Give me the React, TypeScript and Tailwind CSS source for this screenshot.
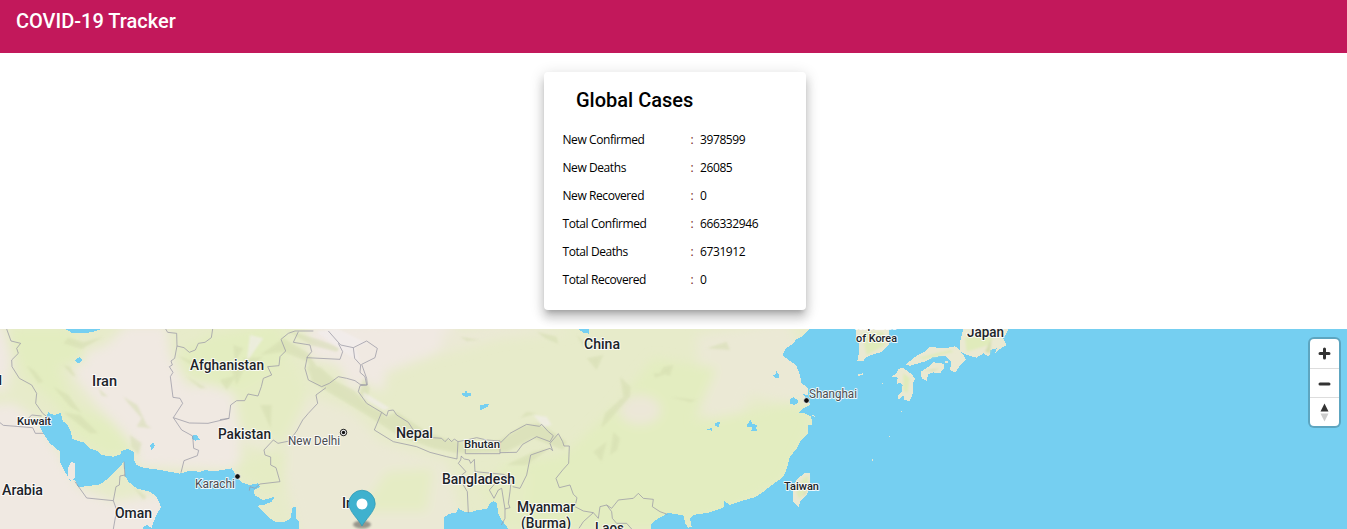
import React from "react";

const cases: [string, string][] = [
  ["New Confirmed", "3978599"],
  ["New Deaths", "26085"],
  ["New Recovered", "0"],
  ["Total Confirmed", "666332946"],
  ["Total Deaths", "6731912"],
  ["Total Recovered", "0"],
];

type Label = { t: string; x: number; y: number; w: number; s: number; minor?: boolean };

const labels: Label[] = [
  { t: "q", x: -6, y: 53, w: 8, s: 13.5 },
  { t: "Iran", x: 92, y: 57, w: 25, s: 14 },
  { t: "Afghanistan", x: 190, y: 41, w: 74, s: 14 },
  { t: "Pakistan", x: 218, y: 110, w: 53, s: 14 },
  { t: "Kuwait", x: 17, y: 96, w: 34, s: 11.5 },
  { t: "Arabia", x: 2, y: 166, w: 41, s: 14 },
  { t: "Oman", x: 115, y: 189, w: 37, s: 14 },
  { t: "Karachi", x: 195, y: 159, w: 40, s: 12.5, minor: true },
  { t: "New Delhi", x: 288, y: 116, w: 52, s: 12.5, minor: true },
  { t: "Nepal", x: 396, y: 109, w: 37, s: 14 },
  { t: "India", x: 342, y: 179, w: 31, s: 14 },
  { t: "Bhutan", x: 464, y: 119, w: 36, s: 11.5 },
  { t: "Bangladesh", x: 442, y: 155, w: 73, s: 14 },
  { t: "Myanmar", x: 517, y: 183, w: 58, s: 14 },
  { t: "(Burma)", x: 521, y: 199, w: 50, s: 14 },
  { t: "Laos", x: 595, y: 204, w: 29, s: 14 },
  { t: "China", x: 584, y: 20, w: 36, s: 14 },
  { t: "Shanghai", x: 809, y: 69, w: 48, s: 12.5, minor: true },
  { t: "Taiwan", x: 784, y: 161, w: 35, s: 11.5 },
  { t: "Republic", x: 855, y: 0, w: 42, s: 11.5 },
  { t: "of Korea", x: 856, y: 13, w: 41, s: 11.5 },
  { t: "Japan", x: 967, y: 8, w: 37, s: 14 },
];

function WorldMap() {
  return (
    <svg className="block h-[200px] w-full" viewBox="0 0 1347 200" preserveAspectRatio="none">
      <defs>
        <filter id="soft" x="-20%" y="-20%" width="140%" height="140%">
          <feGaussianBlur stdDeviation="16" />
        </filter>
        <filter id="relief" x="-20%" y="-20%" width="140%" height="140%">
          <feGaussianBlur stdDeviation="3" />
        </filter>
        <filter id="pinShadow" x="-30%" y="-60%" width="160%" height="220%">
          <feGaussianBlur stdDeviation="1.2" />
        </filter>
      </defs>
      <rect width="1347" height="200" fill="#e7ebca" />
      <g transform="translate(0 -4) scale(0.333333)">
        {/* ground cover */}
        <g filter="url(#soft)">
          <path fill="#f0e9e2" d="M-40 240L40 235 120 290 240 490 345 530 500 500 500 640-40 640ZM220 95L320 60 380 0 500 0 510 90 560 180 700 205 690 320 705 435 410 425 410 370 350 300 290 240 225 160Z" />
          <path fill="#f0e9e2" d="M-40 0L10 0 35 110 20 200-40 190ZM590 180L720 190 720 430 560 430 530 290ZM920 0L1330 -20 1390 20 1300 90 1160 140 1150 200 1090 170 1060 210 1015 120 930 100ZM700 290L840 330 820 370 740 350Z" />
          <path fill="#ebe9d5" d="M1330 20L1520 -10 1720 20 1500 40 1320 90ZM900 200L1060 260 1140 350 1340 410 1400 640 900 640 860 480 830 390ZM2090 30L2360 -10 2480 190 2400 240 2250 210 2200 330 2100 260Z" />
          <path fill="#e3edc0" d="M20 10L210 10 260 110 170 120 220 240 330 290 410 380 320 395 220 330 170 240 80 160ZM540 80L630 30 840 0 870 80 760 210 690 200 560 150ZM1500 420L1690 390 1830 260 1960 100 2150 130 2080 290 2400 230 2440 290 2350 470 2180 560 1980 610 1500 610Z" />
          <path fill="#e5ecc4" d="M700 200L880 100 920 220 850 360 720 320ZM720 410L860 370 850 490 790 500 700 430ZM1420 450L1590 440 1570 610 1510 610ZM1080 560L1160 440 1300 430 1280 560Z" />
          <ellipse fill="#ece7d8" cx="1920" cy="255" rx="62" ry="45" />
        </g>
        {/* relief */}
        <g filter="url(#relief)" fill="#d3dbae" opacity=".5">
          <path d="M190 55L245 72 310 35 250 52 205 38ZM78 120L105 138 130 170 115 175ZM160 185L205 210 245 265 210 245ZM190 262L240 270 295 325 270 325ZM370 215L412 240 440 300 455 310 410 305 425 280 385 235ZM390 330L425 355 415 390 395 365ZM295 190L325 215 305 212ZM190 120L210 125 228 155 215 150ZM530 90L580 110 570 118ZM690 120L740 115 710 180ZM400 485L440 515 430 525ZM730 100L790 95 740 130ZM660 165L710 150 680 195ZM780 240L815 240 812 310ZM560 155L620 190 600 190ZM700 60L730 70 705 110Z" />
          <path d="M780 90L850 40 925 85 970 155 1040 190 1120 250 1160 275 1190 260 1280 320 1340 342 1375 350 1375 385 1300 370 1200 335 1100 270 1000 210 935 170 925 110 850 80ZM860 15L960 45 1020 68 1010 80 930 60ZM1090 160L1110 190 1100 230 1080 205Z" />
          <path d="M920 125L960 125 1010 170 1060 195 1110 245 1150 260 1160 280 1110 265 1050 220 980 190 935 160ZM1200 285L1270 315 1370 365 1340 375 1250 330Z" />
          <path d="M1320 345L1420 355 1500 345 1570 300 1620 295 1665 325 1700 350 1690 375 1600 340 1520 380 1390 385 1320 370ZM1520 420L1600 380 1650 370 1580 420ZM1860 155L1892 185 1890 215 1850 260 1820 295 1803 310 1815 265 1870 215ZM1840 320L1860 340 1852 375 1830 390ZM1780 380L1820 350 1805 410ZM1610 20L1670 35 1675 57 1635 40ZM1760 100L1810 90 1790 135ZM1960 145L2005 145 1965 158ZM1730 30L1765 60 1750 65ZM2010 215L2090 225 2070 232ZM2120 70L2180 50 2190 75ZM1990 125L2020 120 2010 152 1980 145Z" />
          <path d="M1500 345L1570 305 1600 305 1550 345 1505 375ZM1380 35L1440 45 1400 48ZM1580 260L1610 265 1560 280ZM1860 220L1870 235 1840 262Z" />
        </g>
        <path fill="#f3eef0" opacity=".6" filter="url(#relief)" d="M950 20L1010 10 1100 55 1065 65 1080 110 1030 80ZM750 30L790 40 740 110ZM1090 200L1170 250 1150 255 1090 220ZM1600 270L1640 275 1655 300 1630 305Z" />

        {/* seas and lakes */}
        <g fill="#75cff1" shapeRendering="crispEdges">
          <path d="M145 262L155 268 165 270 183 264 188 288 203 300 212 320 217 342 240 350 252 352 270 370 290 377 305 390 340 395 362 388 362 378 385 372 402 382 401 405 410 420 430 428 480 435 540 446 565 438 600 440 615 436 650 438 695 430 705 446 712 458 725 472 750 480 775 475 780 485 760 497 765 512 790 525 825 515 815 530 790 540 773 542 810 580 825 590 855 590 872 580 878 545 888 545 888 580 897 590 897 620 425 620 430 605 440 600 455 608 465 580 483 545 470 515 450 500 410 490 385 470 375 452 372 410 355 430 325 460 300 478 235 487 225 465 210 467 195 440 180 410 180 380 150 355 130 325 120 305 135 280Z" />
          <path d="M197 12H306L280 20 255 25 215 23ZM226 105L238 96 247 105 238 114 228 112ZM450 360L460 353 465 362 455 375ZM577 332L588 328 600 345 585 347 577 343Z" />
          <path d="M1333 620V575L1350 566 1370 562 1375 550 1392 560 1415 562 1430 555 1460 552 1470 535 1480 528 1491 534 1494 565 1505 585 1520 605 1530 620Z" />
          <path d="M1734 12H1768V26L1750 23ZM1386 205H1396V198L1402 198V205H1412V212L1398 217 1386 210ZM1440 240L1466 237 1465 244 1450 252 1440 255Z" />
          <path d="M2430 12H4041V620H1950L1955 595 1975 580 2005 564 2030 568 2052 572 2055 595 2065 608 2075 605 2070 580 2080 570 2130 562 2170 548 2173 528 2190 540 2230 526 2265 517 2290 500 2305 488 2330 470 2350 455 2360 432 2370 395 2390 370 2400 350 2425 325 2425 300 2436 300 2434 275 2415 265 2395 265 2405 253 2432 238 2420 225 2410 208 2425 210 2425 190 2405 175 2400 150 2388 120 2365 105 2347 90 2358 70 2380 55 2390 42 2410 32Z" />
          <path d="M2316 150L2326 150 2329 138 2338 150 2338 157 2327 160ZM2370 222L2380 217 2394 225 2395 232 2384 240 2370 236ZM2117 312L2135 310 2138 318ZM2146 294L2160 290 2157 307 2146 302ZM2242 298L2251 285 2258 298 2273 299 2268 310 2272 317 2254 318 2256 306 2242 305Z" />
        </g>
        <g fill="#eae9d2" shapeRendering="crispEdges">
          <path fill="#f0e9e2" d="M213 411L226 415 226 455 215 467 205 460 203 430Z" />
          <path d="M2415 443L2431 443 2431 478 2420 510 2400 530 2396 548 2380 530 2378 495 2389 465Z" />
          <path d="M2568 12H2668L2667 60 2647 80 2615 90 2597 98 2590 108 2572 107 2577 85 2578 60 2568 35ZM2575 148L2588 145 2588 149 2575 154Z" />
          <path d="M2890 12H3026L3010 40 3020 60 3000 72 2985 87 2990 70 2970 75 2968 95 2950 85 2930 98 2900 90 2882 80 2890 90 2898 105 2883 118 2865 143 2850 135 2854 110 2835 92 2800 96 2780 108 2755 115 2730 122 2717 120 2725 112 2750 92 2775 80 2790 66 2835 70 2865 64 2880 75 2880 50Z" />
          <path d="M2763 140L2785 125 2800 112 2830 116 2833 128 2820 145 2800 142 2785 148 2780 167 2765 160ZM2695 132L2708 128 2732 145 2745 160 2738 178 2738 205 2730 228 2713 225 2710 212 2693 225 2696 208 2705 200 2708 180 2700 172 2690 178 2693 158 2675 155 2690 145Z" />
          <path d="M2646 174H2649V177H2646ZM2702 258H2706V261H2702ZM2667 332H2670V335H2667ZM2615 403H2619V407H2615ZM2434 270H2442L2446 275 2437 274ZM2836 109H2843V115H2836Z" />
        </g>
        <g filter="url(#relief)">
          <path fill="#e0ebbb" d="M2410 460L2425 453 2425 477 2407 510 2397 522 2389 500ZM2585 25L2650 20 2655 60 2600 90ZM2895 40L2940 15 2990 20 2965 60 2900 80ZM2757 98L2850 75 2862 80 2770 103ZM2710 145L2730 160 2722 205 2710 195Z" />
          <path fill="#d5deb1" d="M2424 480L2417 508 2407 515ZM2975 40L2970 85 2955 80ZM2770 138L2820 130 2800 138Z" />
        </g>

        {/* national borders */}
        <g fill="none" stroke="#9c9aa6" strokeWidth="2.3" strokeLinejoin="round">
          <path d="M20 12L33 48 62 55 50 70 55 85 35 105 36 125 58 160 95 180 110 205 107 235 128 265 147 280M0 293L10 301 98 308 106 325 130 325M80 285L95 270 125 273M225 470L260 519 340 527 348 485 358 480 360 453 375 450M340 527L350 555 340 612M372 410L375 455" />
          <path d="M497 12L503 22 530 25 531 63 524 100 513 108 517 120 508 125 519 142 511 155 519 217 540 220 548 235 520 278 545 315 578 333 581 370 596 376 592 392 552 407 543 443M520 278L568 294 624 295 688 280" />
          <path d="M638 12L634 38 615 52 595 55 586 75 568 82 552 68 531 63" />
          <path d="M660 284L687 280 692 240 710 227 734 227 744 207 774 213 784 185 790 160 815 150 803 125 837 122 840 95 857 78 843 43 865 25 885 18 940 18M895 20L880 52 930 60 935 80 922 95 915 130 925 165 965 185 988 175 1015 155 1040 160 1065 167 1080 178 1100 180 1095 155 1080 142 1082 120 1064 100 1060 68 1022 60 985 18M920 98L1020 103 1028 80 1015 55M1060 68L1100 48 1132 70 1125 98 1085 118 1100 160 1102 180 1080 182 1075 200 1100 235 1145 262 1123 315 1180 350 1250 365 1290 382 1340 395 1371 402 1374 350 1363 342 1355 350 1345 340 1335 350 1325 340 1300 338 1270 325 1240 315 1225 292 1190 270 1180 255 1165 257 1160 273 1145 262M978 188L948 210 953 235 925 265 908 285 890 318 868 348 834 355 820 345 792 375 795 390 812 396 812 420 828 428 840 470 780 477 765 490 750 485 748 497" />
          <path d="M1374 350L1400 345 1430 338 1460 345 1500 348 1500 386 1396 386 1396 370M1500 355L1530 325 1580 298 1618 304 1625 298 1645 320 1660 332 1650 350 1610 335 1568 358 1550 382 1500 383M1384 393L1382 405 1375 415 1398 440 1385 450 1390 480 1402 500 1405 564M1383 393L1393 402 1408 405 1412 415 1423 403 1425 440 1510 448 1534 460 1530 500 1525 535 1530 548 1515 552 1505 490 1495 495 1482 520 1468 495 1495 465M1515 552L1515 580 1504 600M1538 485L1560 490 1580 450 1592 390 1650 370 1658 377 1650 355 1675 326 1688 350 1692 363 1708 363 1706 415 1688 435 1668 460 1678 488 1710 480 1720 508 1731 518 1725 545 1750 558 1780 563 1750 590 1737 610M1780 563L1795 580 1800 545 1820 540 1835 550 1855 525 1900 520 1915 505 1930 520 1960 523 1957 545 1980 560 2002 568M1820 540L1835 560 1837 580 1850 595 1880 595 1895 612" />
        </g>
      </g>

      {/* city markers */}
      <g stroke="#fff" strokeOpacity=".75">
        <circle cx="237.5" cy="147.5" r="2.8" fill="#111" />
        <circle cx="806.5" cy="71.5" r="2.8" fill="#111" />
      </g>
      <circle cx="343.5" cy="103.5" r="3.2" fill="#fff" stroke="#111" />
      <circle cx="343.5" cy="103.5" r="1.7" fill="#111" />

      <g fontFamily="Roboto, 'Liberation Sans', sans-serif" paintOrder="stroke" stroke="#fff" strokeOpacity=".85" strokeWidth="2" strokeLinejoin="round">
        {labels.map((l) => (
          <text
            key={l.t}
            x={l.x}
            y={l.y}
            fontSize={l.s}
            fontWeight={l.minor ? 400 : 500}
            fill={l.minor ? "#4b4c50" : "#202329"}
            textLength={l.w}
            lengthAdjust="spacingAndGlyphs"
          >
            {l.t}
          </text>
        ))}
      </g>

      {/* location pin */}
      <ellipse cx="362" cy="195.5" rx="9" ry="4" fill="#333" opacity=".45" filter="url(#pinShadow)" />
      <path d="M362 197C359 191 348.8 182 348.8 174.8A13.2 13.6 0 0 1 375.2 174.8C375.2 182 365 191 362 197Z" fill="#3fb1ce" stroke="#319ab5" strokeWidth=".8" />
      <circle cx="362" cy="175" r="5.5" fill="#fff" />
    </svg>
  );
}

function MapControls() {
  return (
    <div className="absolute top-[10px] right-[8px] flex w-[29px] flex-col divide-y divide-[#ddd] rounded-[4px] bg-white shadow-[0_0_0_2px_rgba(0,0,0,0.2)]">
      <button className="flex h-[30px] items-center justify-center" aria-label="Zoom in">
        <svg className="size-[29px]" viewBox="0 0 29 29">
          <path d="M14.5 10V19M10 14.5H19" stroke="#333" strokeWidth="3" strokeLinecap="round" />
        </svg>
      </button>
      <button className="flex h-[29px] items-center justify-center" aria-label="Zoom out">
        <svg className="size-[29px]" viewBox="0 0 29 29">
          <path d="M10 15H19" stroke="#333" strokeWidth="3" strokeLinecap="round" />
        </svg>
      </button>
      <button className="flex h-[28px] items-center justify-center" aria-label="Reset north">
        <svg className="h-[28px] w-[29px]" viewBox="0 0 29 28">
          <path d="M10.5 13.5L14.5 5.5L18.5 13.5Z" fill="#333" />
          <path d="M10.5 15.5L14.5 23.5L18.5 15.5Z" fill="#ccc" />
        </svg>
      </button>
    </div>
  );
}

export default function App() {
  return (
    <div className="flex h-[529px] w-full flex-col overflow-hidden bg-white font-['Roboto',sans-serif] text-black">
      <header className="h-[53px] shrink-0 bg-[#c2185b] px-4 pt-[5px]">
        <h1 className="text-[20px] leading-8 font-medium text-white">COVID-19 Tracker</h1>
      </header>
      <main className="flex h-[276px] shrink-0 justify-center pt-[19px] pl-[3px]">
        <section className="h-[238px] w-[262px] rounded-[4px] bg-white pt-3 shadow-[0_5px_5px_-3px_rgba(0,0,0,0.2),0_8px_10px_1px_rgba(0,0,0,0.14),0_3px_14px_2px_rgba(0,0,0,0.12)]">
          <h2 className="pl-8 text-[20px] leading-8 font-medium">Global Cases</h2>
          <dl className="mt-[10px] pl-[18.5px] font-['Open_Sans','Noto_Sans',sans-serif] text-[12px]">
            {cases.map(([name, value]) => (
              <div key={name} className="flex h-7 items-center">
                <dt className="w-[128px] tracking-[-0.42px]">{name}</dt>
                <dd className="flex tracking-[-0.4px]">
                  <span className="w-[9.5px] text-[#7a1f1f]">:</span>
                  {value}
                </dd>
              </div>
            ))}
          </dl>
        </section>
      </main>
      <div className="relative h-[200px] shrink-0 overflow-hidden bg-[#75cff1]">
        <WorldMap />
        <MapControls />
      </div>
    </div>
  );
}
